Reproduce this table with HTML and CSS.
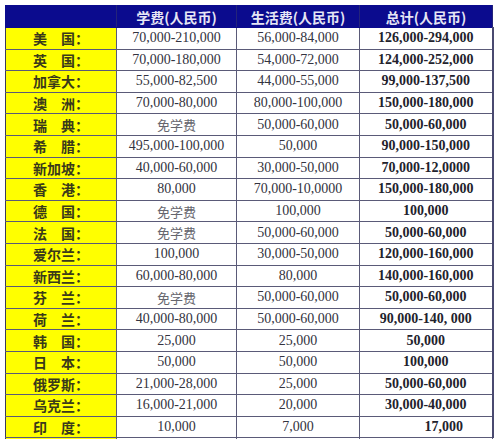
FILE: index.html
```html
<!DOCTYPE html>
<html lang="zh-CN">
<head>
<meta charset="utf-8">
<title>留学费用</title>
<link rel="stylesheet" href="styles.css">
</head>
<body>
<table class="fees">
  <colgroup>
    <col class="c1"><col class="c2"><col class="c3"><col class="c4">
  </colgroup>
  <thead>
    <tr><th></th><th>学费(人民币)</th><th>生活费(人民币)</th><th>总计(人民币)</th></tr>
  </thead>
  <tbody>
    <tr><td class="country">美　国：</td><td>70,000-210,000</td><td>56,000-84,000</td><td class="total">126,000-294,000</td></tr>
    <tr><td class="country">英　国：</td><td>70,000-180,000</td><td>54,000-72,000</td><td class="total">124,000-252,000</td></tr>
    <tr><td class="country">加拿大：</td><td>55,000-82,500</td><td>44,000-55,000</td><td class="total">99,000-137,500</td></tr>
    <tr><td class="country">澳　洲：</td><td>70,000-80,000</td><td>80,000-100,000</td><td class="total">150,000-180,000</td></tr>
    <tr><td class="country">瑞　典：</td><td class="free">免学费</td><td>50,000-60,000</td><td class="total">50,000-60,000</td></tr>
    <tr><td class="country">希　腊：</td><td>495,000-100,000</td><td>50,000</td><td class="total">90,000-150,000</td></tr>
    <tr><td class="country">新加坡：</td><td>40,000-60,000</td><td>30,000-50,000</td><td class="total">70,000-12,0000</td></tr>
    <tr><td class="country">香　港：</td><td>80,000</td><td>70,000-10,0000</td><td class="total">150,000-180,000</td></tr>
    <tr><td class="country">德　国：</td><td class="free">免学费</td><td>100,000</td><td class="total">100,000</td></tr>
    <tr><td class="country">法　国：</td><td class="free">免学费</td><td>50,000-60,000</td><td class="total">50,000-60,000</td></tr>
    <tr><td class="country">爱尔兰：</td><td>100,000</td><td>30,000-50,000</td><td class="total">120,000-160,000</td></tr>
    <tr><td class="country">新西兰：</td><td>60,000-80,000</td><td>80,000</td><td class="total">140,000-160,000</td></tr>
    <tr><td class="country">芬　兰：</td><td class="free">免学费</td><td>50,000-60,000</td><td class="total">50,000-60,000</td></tr>
    <tr><td class="country">荷　兰：</td><td>40,000-80,000</td><td>50,000-60,000</td><td class="total">90,000-140, 000</td></tr>
    <tr><td class="country">韩　国：</td><td>25,000</td><td>25,000</td><td class="total">50,000</td></tr>
    <tr><td class="country">日　本：</td><td>50,000</td><td>50,000</td><td class="total">100,000</td></tr>
    <tr><td class="country">俄罗斯：</td><td>21,000-28,000</td><td>25,000</td><td class="total">50,000-60,000</td></tr>
    <tr><td class="country">乌克兰：</td><td>16,000-21,000</td><td>20,000</td><td class="total">30,000-40,000</td></tr>
    <tr><td class="country">印　度：</td><td>10,000</td><td>7,000</td><td class="total shift">17,000</td></tr>
    <tr><td class="country"></td><td></td><td></td><td></td></tr>
  </tbody>
</table>
</body>
</html>
```

FILE: styles.css
```css
html, body {
  margin: 0;
  padding: 0;
  background: #ffffff;
  overflow: hidden;
}
body {
  padding: 5px 0 0 5px;
  width: 500px;
  height: 439px;
  box-sizing: border-box;
}
.fees {
  border-collapse: collapse;
  table-layout: fixed;
  width: 487px;
  font-family: "Liberation Serif", "Noto Sans CJK SC", serif;
  font-size: 14px;
  color: #333340;
}
.c1 { width: 111px; }
.c2 { width: 120px; }
.c3 { width: 123px; }
.c4 { width: 133px; }

.fees th {
  background: #0b0b8e;
  color: #e6e6f5;
  height: 21px;
  padding: 0;
  font-family: "Noto Sans CJK SC", sans-serif;
  font-weight: 700;
  font-size: 14px;
  text-align: center;
  border: 1px solid #0b0b8e;
  border-right-color: #24247a;
}
.fees td {
  height: 20.6px;
  padding: 0;
  text-align: center;
  border: 1px solid #5a5a78;
  white-space: nowrap;
  line-height: 1;
}
.fees td.country {
  background: #ffff00;
  font-family: "Noto Sans CJK SC", sans-serif;
  font-weight: 700;
  color: #3a3a1a;
  border-left: 1px solid #3a3a5a;
}
.fees td.free {
  font-family: "Noto Sans CJK SC", sans-serif;
  color: #66666e;
  font-size: 13px;
}
.fees td.total {
  font-weight: 700;
  color: #22222c;
  border-right: 2px solid #4a4a70;
}
.fees td.shift {
  padding-left: 36px;
}
```
